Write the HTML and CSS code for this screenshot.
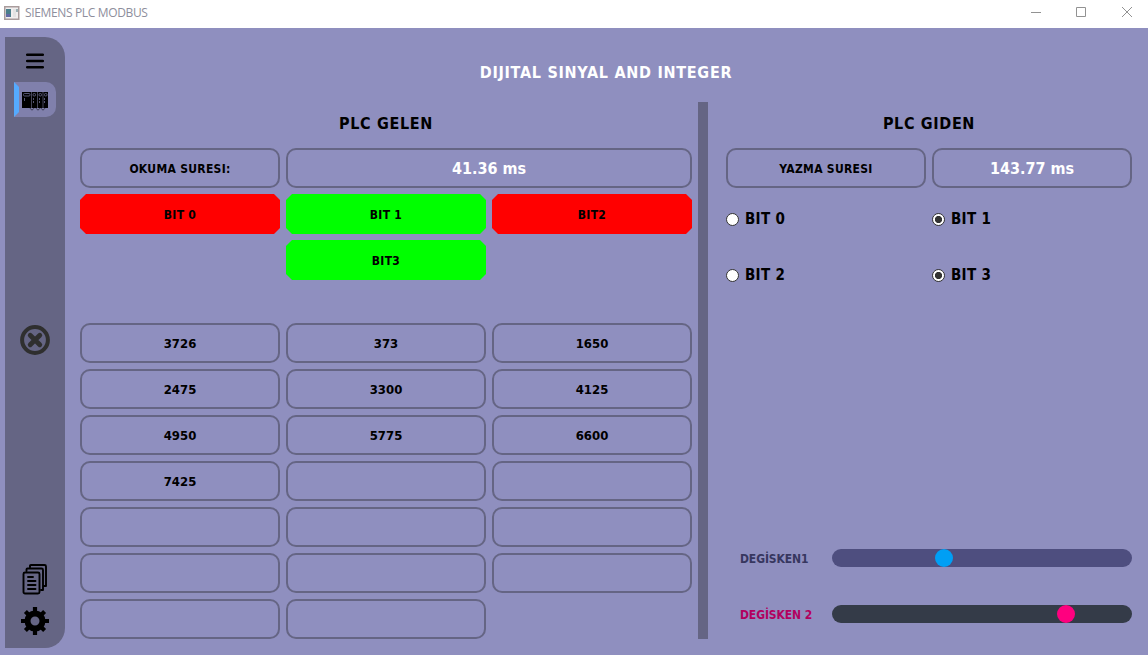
FILE: index.html
```
<!DOCTYPE html>
<html lang="tr">
<head>
<meta charset="utf-8">
<title>SIEMENS PLC MODBUS</title>
<link rel="stylesheet" href="styles.css">
</head>
<body>
<header class="titlebar">
  <svg class="app-icon" width="16" height="14" viewBox="0 0 16 14"><rect x=".75" y=".75" width="14" height="12.5" fill="#f1eeee" stroke="#a99c9c" stroke-width="1.5"/><path d="M2 3h5v8H2z" fill="#4b7f8c"/><path d="M2 8h4v3H2z" fill="#636aa5"/><path d="M9 3h3v8H9z" fill="#e3e3e3"/><path d="M12 3h2v3h-2z" fill="#9bb0b4"/></svg>
  <span class="window-title">SIEMENS PLC MODBUS</span>
  <svg class="window-buttons" width="104" height="14" viewBox="0 0 104 14"><path d="M1 6.500h10M46.500 1.500h9v9h-9zM92 1l10 10M102 1l-10 10" fill="none" stroke="#929292"/></svg>
</header>
<div class="app">
  <nav class="sidebar">
    <svg class="menu-icon" width="18" height="16" viewBox="0 0 18 16"><path d="M1.200 1.800h15.600M1.200 8h15.600M1.200 14.300h15.600" stroke="#000" stroke-width="2.500" stroke-linecap="round"/></svg>
    <div class="nav-active">
      <svg width="42" height="35" viewBox="0 0 42 35"><path d="M0 0l5 5v25l-5 5z" fill="#55aaff"/><path d="M8 10h26v16H8z" fill="#000"/><path d="M17.500 10v16M23.500 10v16M29 10v16" fill="none" stroke="#55556f" stroke-width=".8"/><g fill="none" stroke="#606080" stroke-width=".9"><rect x="9.500" y="11.500" width="6.500" height="2.500" rx="1"/><rect x="19" y="11.500" width="2.500" height="2.500" rx="1"/><rect x="25" y="11.500" width="2.500" height="2.500" rx="1"/><rect x="30.500" y="11.500" width="2.500" height="2.500" rx="1"/><path d="M19.500 16v6M25.500 16v6M30.500 16v6" stroke-dasharray="2 1"/><path d="M10.500 16v3"/></g><path d="M16 26q2 4 4 0M22 26q2 4 4 0M27 26q2 4 4 0" fill="none" stroke="#3a3a50" stroke-width=".9"/></svg>
    </div>
    <svg class="close-icon" width="30" height="30" viewBox="0 0 30 30"><circle cx="15" cy="15" r="12.900" fill="none" stroke="#2f2f2f" stroke-width="4"/><path d="M10.200 10.200l9.600 9.600M19.800 10.200l-9.600 9.600" stroke="#2f2f2f" stroke-width="4.800" stroke-linecap="round"/></svg>
    <svg class="docs-icon" width="26" height="31" viewBox="0 0 26 31"><g fill="none" stroke="#000" stroke-width="1.900" stroke-linejoin="round" stroke-linecap="round"><rect x="1.500" y="8.500" width="16" height="21" rx="1.500"/><path d="M4.500 7V5.500q0-1 1-1h14q1.500 0 1.500 1.500V26h-2M8 3V2q0-1 1-1h13.500q1.500 0 1.500 1.500V22h-2"/><path d="M6 13h5M6 17h7.500M6 21h7.500M6 25h7.500"/></g></svg>
    <svg class="gear-icon" width="28" height="28" viewBox="0 0 28 28"><circle cx="14" cy="14" r="7.500" fill="none" stroke="#000" stroke-width="6"/><g stroke="#000" stroke-width="4.200"><path d="M14 0v5M14 23v5M0 14h5M23 14h5M4.400 4.400l3.500 3.500M20.100 20.100l3.500 3.500M23.600 4.400l-3.500 3.500M7.900 20.100l-3.500 3.500"/></g></svg>
  </nav>
  <main class="content">
    <h1 class="page-title">DIJITAL SINYAL AND INTEGER</h1>
    <div class="panels">
      <section class="incoming">
        <h2 class="panel-title">PLC GELEN</h2>
        <div class="cells">
          <div class="cell"><span class="caption">OKUMA SURESI:</span></div><div class="cell wide time">41.36 ms</div>
          <div class="bit off">BIT 0</div><div class="bit on">BIT 1</div><div class="bit off">BIT2</div>
          <div class="bit on middle">BIT3</div>
        </div>
        <div class="cells registers">
          <div class="cell">3726</div><div class="cell">373</div><div class="cell">1650</div>
          <div class="cell">2475</div><div class="cell">3300</div><div class="cell">4125</div>
          <div class="cell">4950</div><div class="cell">5775</div><div class="cell">6600</div>
          <div class="cell">7425</div><div class="cell"></div><div class="cell"></div>
          <div class="cell"></div><div class="cell"></div><div class="cell"></div>
          <div class="cell"></div><div class="cell"></div><div class="cell"></div>
          <div class="cell"></div><div class="cell"></div>
        </div>
      </section>
      <div class="divider"></div>
      <section class="outgoing">
        <h2 class="panel-title">PLC GIDEN</h2>
        <div class="cells pair">
          <div class="cell"><span class="caption">YAZMA SURESI</span></div><div class="cell time">143.77 ms</div>
        </div>
        <div class="radios">
          <label class="radio"><i class="dot"></i>BIT 0</label><label class="radio"><i class="dot checked"></i>BIT 1</label>
          <label class="radio"><i class="dot"></i>BIT 2</label><label class="radio"><i class="dot checked"></i>BIT 3</label>
        </div>
        <div class="sliders">
          <div class="slider-row"><span class="slider-label first">DEGİSKEN1</span><div class="track blue"><div class="thumb" style="margin-left:103px"></div></div></div>
          <div class="slider-row"><span class="slider-label second">DEGİSKEN 2</span><div class="track dark"><div class="thumb" style="margin-left:225px"></div></div></div>
        </div>
      </section>
    </div>
  </main>
</div>
</body>
</html>
```
FILE: styles.css
```
* { box-sizing: border-box; }
body {
  margin: 0;
  width: 1148px;
  height: 655px;
  overflow: hidden;
  background: #8f8fbf;
  color: #000;
  font: bold 13px "DejaVu Sans Condensed", "DejaVu Sans", sans-serif;
  font-stretch: condensed;
  white-space: nowrap;
}
svg { display: block; flex: none; }
.titlebar {
  display: flex;
  align-items: center;
  height: 28px;
  padding: 0 14px 3px 4px;
  background: #fff;
}
.window-title {
  margin-left: 5px;
  font: 12px "Open Sans", "Noto Sans", sans-serif;
  letter-spacing: -0.35px;
  color: #8e8e9c;
}
.window-buttons { margin-left: auto; }
.app { display: flex; height: 627px; padding: 9px 16px 7px 5px; }
.sidebar {
  display: flex;
  flex-direction: column;
  align-items: center;
  width: 60px;
  height: 611px;
  padding-top: 16px;
  background: #656584;
  border-radius: 0 20px 20px 0;
}
.nav-active {
  width: 42px;
  height: 35px;
  margin-top: 13px;
  background: #8080ac;
  border-radius: 0 10px 10px 0;
}
.close-icon { margin-top: 208px; }
.docs-icon { margin-top: 209px; }
.gear-icon { margin-top: 12px; }
.content { width: 1052px; margin-left: 15px; }
.page-title {
  margin: 0;
  height: 65px;
  padding-top: 26px;
  font-size: 16px;
  line-height: 20px;
  letter-spacing: 0.72px;
  text-align: center;
  color: #fff;
}
.panels { display: flex; height: 537px; }
.incoming { width: 612px; }
.divider { width: 10px; height: 537px; margin: 0 18px 0 6px; background: #656584; }
.outgoing { display: flex; flex-direction: column; width: 406px; }
.panel-title {
  margin: 0;
  height: 46px;
  padding-top: 2px;
  font-size: 16px;
  line-height: 40px;
  letter-spacing: 0.65px;
  text-align: center;
}
.cells { display: grid; grid-template-columns: repeat(3, 200px); grid-auto-rows: 40px; gap: 6px; }
.pair { grid-template-columns: repeat(2, 200px); }
.registers { margin-top: 43px; }
.cell, .bit { display: flex; align-items: center; justify-content: center; }
.cell { border: 2px solid #656584; border-radius: 10px; }
.wide { grid-column: span 2; }
.time { color: #fff; font-size: 16px; }
.caption { padding-top: 1px; font-size: 12px; letter-spacing: 0.3px; }
.bit {
  padding-top: 1px;
  font-size: 12px;
  letter-spacing: 0.3px;
  clip-path: polygon(6px 0, 194px 0, 100% 6px, 100% 34px, 194px 100%, 6px 100%, 0 34px, 0 6px);
}
.off { background: #f00; }
.on { background: #0f0; }
.middle { grid-column: 2; }
.radios { display: grid; grid-template-columns: repeat(2, 200px); grid-auto-rows: 50px; gap: 6px; margin-top: 6px; }
.radio { display: flex; align-items: center; gap: 6px; font-size: 15px; letter-spacing: 0.3px; }
.dot {
  width: 13px;
  height: 13px;
  border: 1px solid #333;
  border-radius: 50%;
  background: #fff;
}
.checked { background: radial-gradient(circle, #333 0 3.3px, #fff 3.9px); }
.sliders { display: flex; flex-direction: column; gap: 38px; margin: auto 0 16px 14px; }
.slider-row { display: flex; align-items: center; height: 18px; }
.slider-label { width: 92px; padding-top: 1px; font-size: 12px; letter-spacing: -0.1px; }
.first { color: #37375f; }
.second { color: #b3005e; }
.track { width: 300px; height: 18px; border-radius: 9px; }
.blue { background: #4e4e7f; }
.dark { background: #343b48; }
.thumb { width: 18px; height: 18px; border-radius: 50%; }
.blue .thumb { background: #009ff5; }
.dark .thumb { background: #ff007f; }
```
